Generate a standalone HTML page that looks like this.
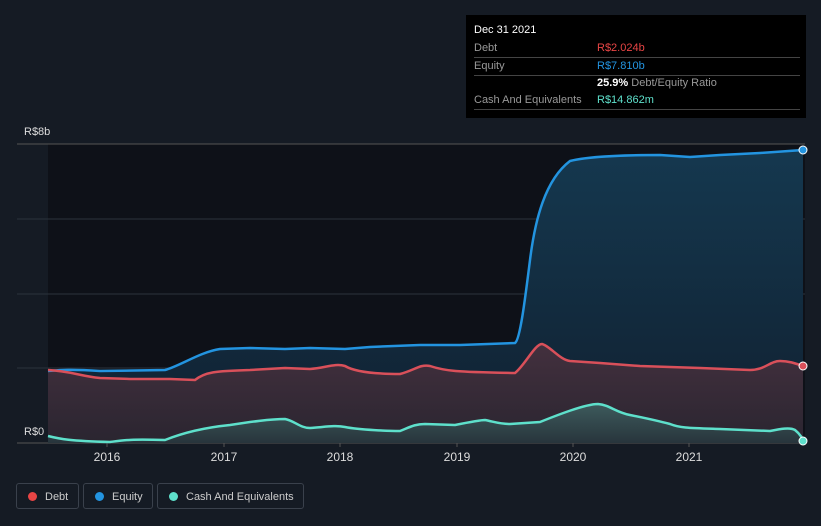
<!DOCTYPE html><html><head><style>
body{margin:0;width:821px;height:526px;background:#151b24;font-family:"Liberation Sans",sans-serif;overflow:hidden;position:relative}
.tt{position:absolute;left:466px;top:15px;width:340px;height:103px;background:#000;font-size:11px}
.tt .r{position:absolute;left:8px;right:6px;height:17px;border-bottom:1px solid #444;color:#999;line-height:17px}
.tt .r span{position:absolute;left:123px}
.leg{position:absolute;top:483px;height:26px;border:1px solid #3a414c;border-radius:3px;color:#ccc;font-size:11px;line-height:26px;box-sizing:border-box}
.leg i{position:absolute;left:11px;top:8px;width:9px;height:9px;border-radius:50%}
.leg b{font-weight:normal;position:absolute;left:28px}
</style></head><body>
<svg width="821" height="526" style="position:absolute;left:0;top:0">
<defs>
<linearGradient id="ge" x1="0" y1="0" x2="0" y2="1"><stop offset="0" stop-color="#15384f"/><stop offset="1" stop-color="#102030"/></linearGradient>
<linearGradient id="gd" x1="0" y1="0" x2="0" y2="1"><stop offset="0" stop-color="#43303e"/><stop offset="1" stop-color="#2a2530"/></linearGradient>
<linearGradient id="gc" x1="0" y1="0" x2="0" y2="1"><stop offset="0" stop-color="#3d5a5c"/><stop offset="1" stop-color="#28353c"/></linearGradient>
</defs>
<rect x="48" y="144" width="757" height="299" fill="#0e1118"/>
<g stroke="#2c333c" stroke-width="1"><line x1="17" y1="144" x2="805" y2="144" stroke="#555"/><line x1="17" y1="219" x2="805" y2="219"/><line x1="17" y1="294" x2="805" y2="294"/><line x1="17" y1="368" x2="805" y2="368"/><line x1="17" y1="443" x2="805" y2="443" stroke="#555"/></g>
<g stroke="#555"><line x1="107" y1="443" x2="107" y2="447"/><line x1="224" y1="443" x2="224" y2="447"/><line x1="340" y1="443" x2="340" y2="447"/><line x1="457" y1="443" x2="457" y2="447"/><line x1="573" y1="443" x2="573" y2="447"/><line x1="689" y1="443" x2="689" y2="447"/></g>
<path d="M48,371 C60,370 70,369 100,371 L165,370 C180,366 200,352 220,349 L250,348 285,349 310,348 345,349 370,347 420,345 460,345 515,343 C520,340 525,300 530,260 C535,220 545,180 570,161 C585,157 620,155 660,155 L690,157 720,155 760,153 803,150 L803,443 48,443Z" fill="url(#ge)"/>
<path d="M48,370 C70,371 80,376 100,378 L130,379 170,379 195,380 C205,372 215,371 250,370 L285,368 310,369 C325,368 335,363 345,366 C355,372 375,374 400,374 C415,370 420,364 430,366 C445,371 455,372 515,373 C525,365 535,344 542,344 C550,346 560,360 570,361 L600,363 640,366 700,368 750,370 C765,370 770,361 780,361 C790,361 797,364 803,366 L803,443 48,443Z" fill="url(#gd)"/>
<path d="M48,436 C60,439 70,441 110,442 C125,440 130,439 165,440 C180,434 200,428 230,425 C250,422 270,419 285,419 C295,421 300,428 310,428 C325,427 335,425 345,427 C360,430 390,431 400,431 C410,427 415,424 425,424 L455,425 C470,422 480,420 485,420 C495,422 500,424 510,424 L540,422 C555,416 585,404 598,404 C610,405 615,412 630,415 C645,418 655,420 670,424 C680,428 690,428 720,429 L770,431 C780,429 790,427 795,430 C800,434 803,439 803,441 L803,443 48,443Z" fill="url(#gc)"/>
<path d="M48,371 C60,370 70,369 100,371 L165,370 C180,366 200,352 220,349 L250,348 285,349 310,348 345,349 370,347 420,345 460,345 515,343 C520,340 525,300 530,260 C535,220 545,180 570,161 C585,157 620,155 660,155 L690,157 720,155 760,153 803,150" fill="none" stroke="#2394e0" stroke-width="2.5"/>
<path d="M48,370 C70,371 80,376 100,378 L130,379 170,379 195,380 C205,372 215,371 250,370 L285,368 310,369 C325,368 335,363 345,366 C355,372 375,374 400,374 C415,370 420,364 430,366 C445,371 455,372 515,373 C525,365 535,344 542,344 C550,346 560,360 570,361 L600,363 640,366 700,368 750,370 C765,370 770,361 780,361 C790,361 797,364 803,366" fill="none" stroke="#d9505a" stroke-width="2.5"/>
<path d="M48,436 C60,439 70,441 110,442 C125,440 130,439 165,440 C180,434 200,428 230,425 C250,422 270,419 285,419 C295,421 300,428 310,428 C325,427 335,425 345,427 C360,430 390,431 400,431 C410,427 415,424 425,424 L455,425 C470,422 480,420 485,420 C495,422 500,424 510,424 L540,422 C555,416 585,404 598,404 C610,405 615,412 630,415 C645,418 655,420 670,424 C680,428 690,428 720,429 L770,431 C780,429 790,427 795,430 C800,434 803,439 803,441" fill="none" stroke="#5ee0cb" stroke-width="2.5"/>
<circle cx="803" cy="150" r="4" fill="#2394e0" stroke="#fff" stroke-width="1"/>
<circle cx="803" cy="366" r="4" fill="#d9505a" stroke="#fff" stroke-width="1"/>
<circle cx="803" cy="441" r="4" fill="#5ee0cb" stroke="#fff" stroke-width="1"/>
<rect x="17" y="423" width="30" height="17" fill="#151b24"/>
<g fill="#ddd" font-size="11" font-family="Liberation Sans"><text x="24" y="135">R$8b</text><text x="24" y="435">R$0</text>
<g text-anchor="middle" font-size="12"><text x="107" y="461">2016</text><text x="224" y="461">2017</text><text x="340" y="461">2018</text><text x="457" y="461">2019</text><text x="573" y="461">2020</text><text x="689" y="461">2021</text></g></g>
</svg>
<div class="tt">
<div style="position:absolute;left:8px;top:9px;color:#fff">Dec 31 2021</div>
<div class="r" style="top:25px">Debt<span style="color:#e84545">R$2.024b</span></div>
<div class="r" style="top:43px">Equity<span style="color:#2394e0">R$7.810b</span></div>
<div class="r" style="top:60px;border:none"><span style="color:#fff"><b>25.9%</b> <span style="position:static;color:#999">Debt/Equity Ratio</span></span></div>
<div class="r" style="top:77px">Cash And Equivalents<span style="color:#5ee0cb">R$14.862m</span></div>
</div>
<div class="leg" style="left:16px;width:63px"><i style="background:#e84545"></i><b>Debt</b></div>
<div class="leg" style="left:83px;width:70px"><i style="background:#2394e0"></i><b>Equity</b></div>
<div class="leg" style="left:157px;width:147px"><i style="background:#5ee0cb"></i><b>Cash And Equivalents</b></div>
</body></html>
